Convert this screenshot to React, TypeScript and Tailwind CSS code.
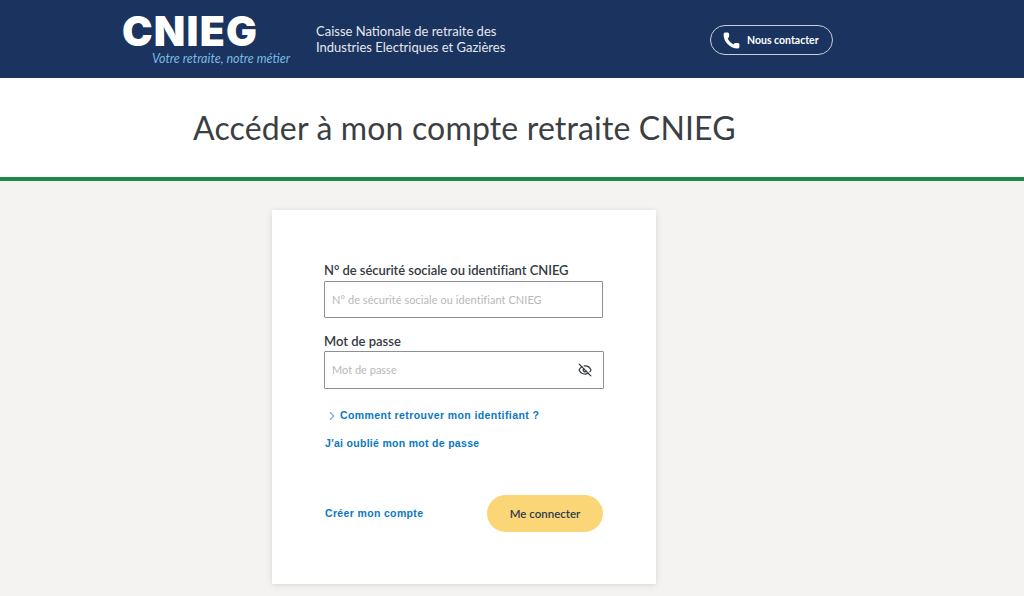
import React, { useState } from 'react';
import { ChevronRight, EyeOff, Phone } from 'lucide-react';

const App = () => {
  const [id, setId] = useState("");
  const [password, setPassword] = useState("");

  return (
    <div className="h-[596px] overflow-hidden bg-[#f4f3f1] font-['Lato','Liberation_Sans',sans-serif] text-[#333a42]">
      {/* header */}
      <header className="flex h-[78px] items-start bg-[#1a335f] pl-[122px] text-white">
        <div className="w-[194px] pt-[13px]">
          <div className="font-['Inter',sans-serif] text-[41px] leading-[36px] font-black tracking-[1.2px]">CNIEG</div>
          <div className="pt-[3px] pl-[30px] text-[12.5px] leading-[14px] italic text-[#7db9e3] whitespace-nowrap">
            Votre retraite, notre métier
          </div>
        </div>
        <div className="w-[394px] pt-[23px] text-[13px] leading-[16px] text-[#e4e8ee]">
          <div>Caisse Nationale de retraite des</div>
          <div>Industries Electriques et Gazières</div>
        </div>
        <a className="mt-[25px] flex h-[30px] w-[123px] items-center gap-[6px] rounded-full border border-[#c9cfd9] pl-[11px] text-[10.5px] font-bold whitespace-nowrap">
          <Phone size={19} fill="white" strokeWidth={0} />
          <span className="pt-[1px]">Nous contacter</span>
        </a>
      </header>

      {/* title */}
      <div className="h-[103px] border-b-4 border-[#1f8a44] bg-white pt-[30px] pl-[193px]">
        <h1 className="text-[32px] leading-[40px] tracking-[0.16px] text-[#3b3f44]">Accéder à mon compte retraite CNIEG</h1>
      </div>

      {/* login card */}
      <main className="pt-[29px] pl-[272px]">
        <form className="h-[374px] w-[384px] bg-white px-[52px] pt-[51px] shadow-[0_1px_6px_rgba(0,0,0,0.12)]">
          <label htmlFor="identifiant" className="block text-[13px] leading-[18px] font-semibold tracking-[-0.05px]">
            N° de sécurité sociale ou identifiant CNIEG
          </label>
          <input
            id="identifiant"
            value={id}
            onChange={(e) => setId(e.target.value)}
            placeholder="N° de sécurité sociale ou identifiant CNIEG"
            className="mt-[2px] block h-[37px] w-[279px] rounded-[1px] border border-[#8c8f93] px-[7px] text-[11px] tracking-[0.05px] outline-none placeholder:text-[#b8b8b8]"
          />
          <label htmlFor="password" className="mt-[14px] block text-[13px] leading-[18px] font-semibold">
            Mot de passe
          </label>
          <div className="relative mt-[1px] w-[280px]">
            <input
              id="password"
              type="password"
              value={password}
              onChange={(e) => setPassword(e.target.value)}
              placeholder="Mot de passe"
              className="block h-[38px] w-full rounded-[1px] border border-[#8c8f93] px-[7px] pb-[1px] text-[11px] outline-none placeholder:text-[#b8b8b8]"
            />
            <EyeOff size={14} strokeWidth={2.2} className="absolute top-[12px] right-[12px] text-[#333a42]" />
          </div>

          <a className="mt-[19px] flex h-[16px] items-center gap-[1px] pl-[1px] font-['Liberation_Sans',sans-serif] text-[10.5px] font-bold tracking-[0.41px] text-[#0a78c2]">
            <ChevronRight size={14} strokeWidth={2} className="text-[#6eb4e4]" />
            Comment retrouver mon identifiant ?
          </a>
          <a className="mt-[11px] block h-[16px] pl-[1px] font-['Liberation_Sans',sans-serif] text-[10.5px] leading-[16px] font-bold tracking-[0.3px] text-[#0a78c2]">
            J'ai oublié mon mot de passe
          </a>

          <div className="mt-[44px] flex w-[279px] items-center justify-between">
            <a className="pl-[1px] font-['Liberation_Sans',sans-serif] text-[10.5px] font-bold tracking-[0.35px] text-[#0a78c2]">Créer mon compte</a>
            <button type="button" className="h-[37px] w-[116px] rounded-full bg-[#fbd677] text-[11.5px] font-semibold text-[#2f3b4c]">
              Me connecter
            </button>
          </div>
        </form>
      </main>
    </div>
  );
};

export default App;
